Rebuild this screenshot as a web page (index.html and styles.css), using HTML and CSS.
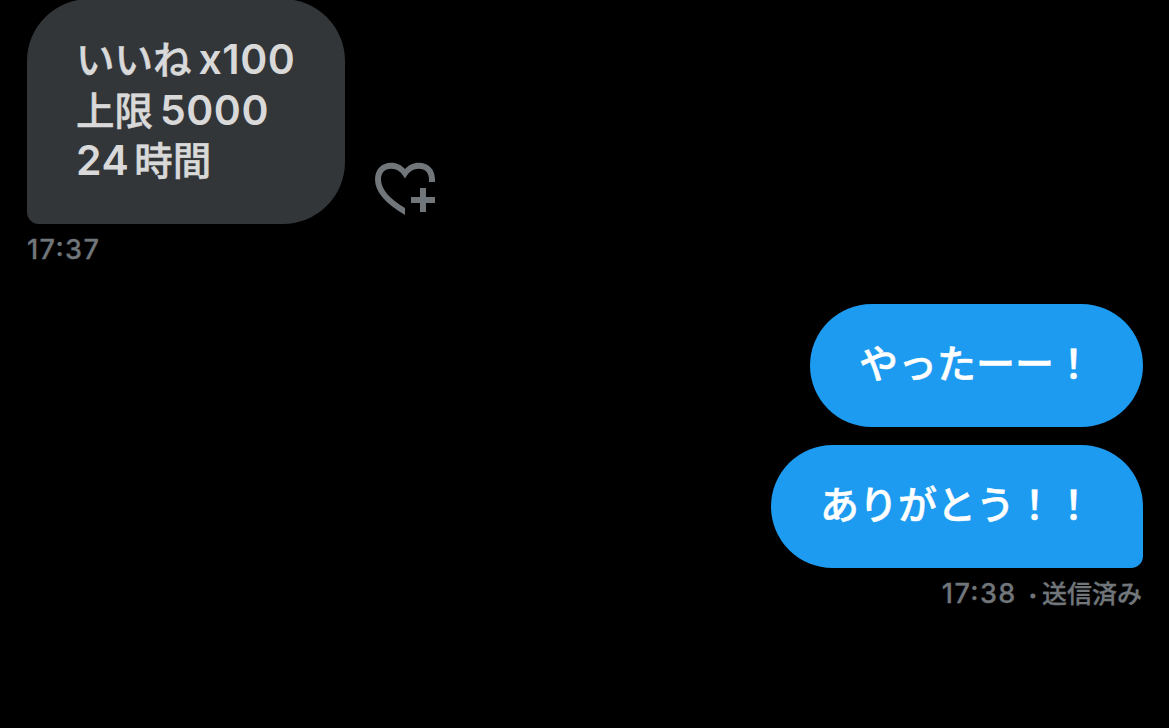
FILE: index.html
```
<!DOCTYPE html>
<html lang="ja">
<head>
  <meta charset="UTF-8">
  <meta name="viewport" content="width=device-width, initial-scale=1.0">
  <title>メッセージ</title>
  <link rel="stylesheet" href="styles.css">
</head>
<body>
  <main class="chat">
    <div class="row">
      <div class="bubble received">
        <p>いいね<span class="latin gap-left">x100</span></p>
        <p>上限<span class="latin gap-left">5000</span></p>
        <p><span class="latin gap-right">24</span>時間</p>
      </div>
      <svg class="react" width="62" height="54" viewBox="0 0 62 54" fill="#71767b">
        <path d="M30 53C11 42 0 30 0 17.500C0 7 7 .7 16 .7C22 .7 26.500 3 30 7C33.500 3 38 .7 44 .7C53 .7 60 7 60 17.500V20H54V17.500C54 10.500 50 6.700 44 6.700C37 6.700 33.500 10.500 30 16.500C26.500 10.500 23 6.700 16 6.700C10 6.700 6 10.500 6 17.500C6 27 14.500 37 30 46Z"/>
        <path d="M45 26h6v9h9v6h-9v9h-6v-9h-9v-6h9z"/>
      </svg>
    </div>
    <div class="meta"><span class="time">17:37</span></div>

    <div class="sent-group">
      <div class="bubble sent"><p>やったーー！</p></div>
      <div class="bubble sent last"><p>ありがとう！！</p></div>
      <div class="meta"><span class="time">17:38</span><span class="dot">·</span><span class="status">送信済み</span></div>
    </div>
  </main>
</body>
</html>
```

FILE: styles.css
```
* {
  box-sizing: border-box;
}

body {
  margin: 0;
  background-color: #000;
  font-family: "Noto Sans CJK JP", sans-serif;
  overflow: hidden;
}

p {
  margin: 0;
}

.chat {
  height: 728px;
  padding: 0 26px 0 27px;
}

.row {
  display: flex;
  align-items: flex-end;
  gap: 30px;
}

.bubble {
  border-radius: 62px;
  font-size: 39px;
  font-weight: 500;
  line-height: 50px;
  white-space: nowrap;
  -webkit-text-stroke: 0.5px currentColor;
}

.received {
  width: 318px;
  height: 225px;
  margin-top: -1px;
  padding: 33px 48px 0 49px;
  border-bottom-left-radius: 12px;
  background-color: #333639;
  color: #d9d9d9;
  font-size: 38.5px;
}

.received p {
  height: 50.5px;
}

.latin {
  font-family: Inter, sans-serif;
  font-size: 41px;
  font-weight: 600;
  line-height: 1;
  letter-spacing: 0.5px;
  -webkit-text-stroke: 0;
}

.gap-left {
  margin-left: 7px;
}

.gap-right {
  margin-right: 5px;
}

.react {
  margin-bottom: 8px;
}

.meta {
  display: flex;
  height: 50px;
  align-items: center;
  color: #71767b;
  font-size: 25px;
  font-weight: 500;
  line-height: 50px;
}

.time {
  padding-top: 2px;
  font-family: Inter, sans-serif;
  font-size: 27px;
  font-feature-settings: "case";
  letter-spacing: 1.4px;
  -webkit-text-stroke: 0.3px currentColor;
}

.dot {
  margin: 2px 2px 0 9px;
  -webkit-text-stroke: 1px currentColor;
}

.status {
  margin: -2px 1px 0 0;
  -webkit-text-stroke: 0.3px currentColor;
}

.sent-group {
  display: flex;
  flex-direction: column;
  align-items: flex-end;
  margin-top: 30px;
}

.sent {
  width: 333px;
  height: 123px;
  padding: 32px 48px 0 49px;
  background-color: #1d9bf0;
  color: #fff;
}

.last {
  width: 372px;
  margin-top: 18px;
  border-bottom-right-radius: 12px;
}
```
